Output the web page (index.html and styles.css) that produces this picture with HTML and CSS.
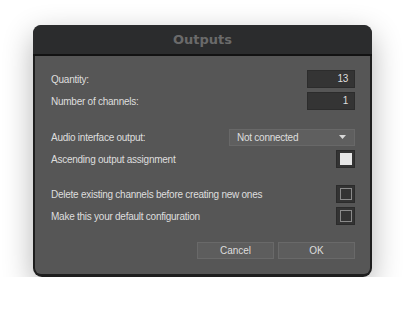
FILE: index.html
```html
<!DOCTYPE html>
<html>
<head>
  <title>Outputs</title>
  <meta name="viewport" content="width=device-width, initial-scale=1.0">
  <link rel="stylesheet" href="styles.css">
</head>
<body>
  <div class="window">
    <div class="titlebar">Outputs</div>
    <div class="content">
      <div class="row">
        <span class="label">Quantity:</span>
        <div class="numbox">13</div>
      </div>
      <div class="row">
        <span class="label">Number of channels:</span>
        <div class="numbox">1</div>
      </div>

      <div class="row group">
        <span class="label">Audio interface output:</span>
        <div class="dropdown">
          <span>Not connected</span>
          <svg width="7" height="4" viewBox="0 0 7 4"><path d="M0 0h7L3.5 4z" fill="#d8d8d8"/></svg>
        </div>
      </div>
      <div class="row">
        <span class="label">Ascending output assignment</span>
        <div class="check checked"><i></i></div>
      </div>

      <div class="row group tight">
        <span class="label">Delete existing channels before creating new ones</span>
        <div class="check"><i></i></div>
      </div>
      <div class="row">
        <span class="label">Make this your default configuration</span>
        <div class="check"><i></i></div>
      </div>

      <div class="buttons">
        <button type="button">Cancel</button>
        <button type="button">OK</button>
      </div>
    </div>
  </div>
</body>
</html>
```

FILE: styles.css
```css
body {
  margin: 0;
  background-color: #ffffff;
  font-family: 'Liberation Sans', Arial, sans-serif;
  font-size: 10px;
  letter-spacing: -0.25px;
  color: #dedede;
}

.window {
  margin: 25px 0 0 33px;
  width: 339px;
  height: 252px;
  box-sizing: border-box;
  background-color: #1e1e1e;
  border-radius: 9px;
  padding: 0 2px 3px;
  display: flex;
  flex-direction: column;
  box-shadow: 0 10px 30px rgba(0, 0, 0, 0.3);
}

.titlebar {
  height: 29px;
  line-height: 29px;
  text-align: center;
  background-color: #2b2c2d;
  border-radius: 8px 8px 0 0;
  border-bottom: 2px solid #121212;
  margin: 0 -2px;
  color: #6a6a6a;
  font-family: 'DejaVu Sans', sans-serif;
  font-weight: bold;
  font-size: 13px;
  letter-spacing: 0;
}

.content {
  flex: 1;
  background-color: #565656;
  border-radius: 0 0 6px 6px;
  padding: 14px 15px 0 16px;
  display: flex;
  flex-direction: column;
  gap: 4px;
}

.row {
  display: flex;
  align-items: center;
  justify-content: space-between;
  height: 18px;
}

.row.group {
  margin-top: 14px;
}

.row.tight {
  margin-top: 13px;
}

.numbox {
  width: 48px;
  height: 18px;
  box-sizing: border-box;
  background-color: #343434;
  border: 1px solid #2c2c2c;
  text-align: right;
  padding-right: 6px;
  line-height: 16px;
}

.dropdown {
  width: 126px;
  height: 17px;
  box-sizing: border-box;
  background-color: #5f5f5f;
  border: 1px solid #686868;
  display: flex;
  align-items: center;
  justify-content: space-between;
  padding: 0 8px 0 7px;
}

.check {
  width: 19px;
  height: 18px;
  box-sizing: border-box;
  background-color: #333333;
  border: 1px solid #2b2b2b;
  display: flex;
  align-items: center;
  justify-content: center;
}

.check i {
  width: 10px;
  height: 10px;
  border: 1px solid #8a8a8a;
}

.check.checked i {
  width: 12px;
  height: 12px;
  border: none;
  background-color: #e6e6e6;
}

.buttons {
  display: flex;
  justify-content: flex-end;
  gap: 4px;
  margin-top: 13px;
}

.buttons button {
  width: 77px;
  height: 17px;
  background-color: #5d5d5d;
  border: 1px solid #696969;
  color: #dedede;
  font-family: 'Liberation Sans', Arial, sans-serif;
  font-size: 10px;
  padding: 0;
}
```
